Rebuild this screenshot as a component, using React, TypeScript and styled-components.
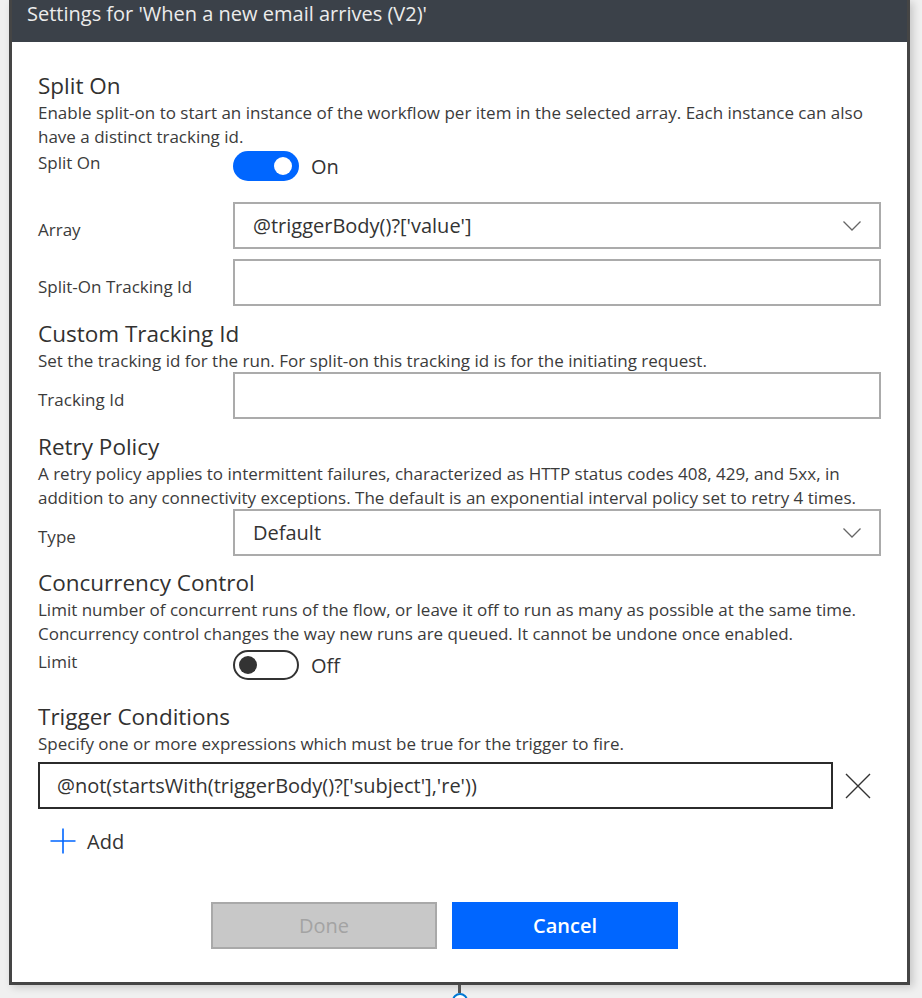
import React from "react";
import styled, { createGlobalStyle } from "styled-components";

const GlobalStyle = createGlobalStyle`
  html, body {
    margin: 0;
    padding: 0;
    background: #f0f0f0;
    overflow: hidden;
  }
  body {
    font-family: "Open Sans", "Noto Sans", sans-serif;
    color: #333333;
  }
`;

const Page = styled.div`
  width: 922px;
  height: 998px;
  box-sizing: border-box;
  padding-left: 9px;
  display: flex;
  flex-direction: column;
`;

const Dialog = styled.div`
  width: 901px;
  box-sizing: border-box;
  background: #ffffff;
  border: 3px solid #454545;
  border-top: 0;
  box-shadow: 3px 2px 8px rgba(0, 0, 0, 0.18);
`;

const Header = styled.div`
  height: 42px;
  background: #3b4149;
  padding: 0 15px;
  color: #ececec;
  font-size: 20px;
  line-height: 28px;
  white-space: nowrap;
  overflow: hidden;
`;

const Body = styled.div`
  padding: 29px 26px 33px 26px;
  display: flex;
  flex-direction: column;
`;

const Heading = styled.div<{ $mt?: number }>`
  font-size: 22.5px;
  line-height: 30px;
  color: #323130;
  margin-top: ${(p) => p.$mt ?? 0}px;
`;

const Description = styled.div`
  font-size: 17px;
  line-height: 24px;
  color: #3b3b3b;
  white-space: nowrap;
`;

const Row = styled.div<{ $mt?: number }>`
  display: grid;
  grid-template-columns: 195px 1fr;
  align-items: start;
  margin-top: ${(p) => p.$mt ?? 0}px;
`;

const Label = styled.div<{ $pt?: number }>`
  font-size: 17px;
  line-height: 24px;
  color: #3b3b3b;
  padding-top: ${(p) => p.$pt ?? 0}px;
`;

const ToggleWrap = styled.div`
  display: flex;
  align-items: center;
  gap: 12px;
  height: 30px;
`;

const Track = styled.div<{ $on: boolean }>`
  width: 66px;
  height: 30px;
  box-sizing: border-box;
  border-radius: 15px;
  display: flex;
  align-items: center;
  justify-content: ${(p) => (p.$on ? "flex-end" : "flex-start")};
  padding: 0 ${(p) => (p.$on ? 7 : 4)}px;
  background: ${(p) => (p.$on ? "#0066ff" : "#ffffff")};
  border: ${(p) => (p.$on ? "none" : "2px solid #333333")};
`;

const Knob = styled.div<{ $on: boolean }>`
  width: 18px;
  height: 18px;
  border-radius: 50%;
  background: ${(p) => (p.$on ? "#ffffff" : "#333333")};
`;

const ToggleText = styled.span`
  font-size: 20px;
  line-height: 24px;
  color: #333333;
  padding-top: 2px;
`;

const Field = styled.div<{ $dark?: boolean }>`
  height: 47px;
  box-sizing: border-box;
  border: 2px solid ${(p) => (p.$dark ? "#2b2b2b" : "#ababab")};
  display: flex;
  align-items: center;
  justify-content: space-between;
  padding: 0 17px 0 18px;
  font-size: 20px;
  color: #333333;
  white-space: nowrap;
  overflow: hidden;
`;

const ConditionRow = styled.div`
  display: flex;
  align-items: center;
  gap: 12px;
  margin-top: 6px;
`;

const ConditionField = styled(Field)`
  flex: 1;
  padding-left: 17px;
`;

const IconButton = styled.div`
  width: 26px;
  height: 30px;
  margin-right: 10px;
  display: flex;
  align-items: center;
  justify-content: center;
`;

const AddButton = styled.div`
  display: flex;
  align-items: center;
  gap: 11px;
  margin-top: 12px;
  padding-left: 12px;
  height: 40px;
  font-size: 20px;
  color: #333333;
`;

const ButtonRow = styled.div`
  display: flex;
  justify-content: center;
  gap: 15px;
  margin-top: 41px;
  padding-right: 30px;
`;

const Button = styled.div<{ $primary?: boolean }>`
  width: 226px;
  height: 47px;
  box-sizing: border-box;
  display: flex;
  align-items: center;
  justify-content: center;
  font-size: 20px;
  font-weight: ${(p) => (p.$primary ? 600 : 400)};
  background: ${(p) => (p.$primary ? "#0066ff" : "#c8c8c8")};
  color: ${(p) => (p.$primary ? "#ffffff" : "#a3a3a3")};
  border: ${(p) => (p.$primary ? "none" : "2px solid #a9a9a9")};
`;

const Connector = styled.div`
  width: 901px;
  display: flex;
  flex-direction: column;
  align-items: center;
`;

const ConnectorLine = styled.div`
  width: 3px;
  height: 8px;
  background: #555555;
`;

const ConnectorDot = styled.div`
  width: 16px;
  height: 16px;
  box-sizing: border-box;
  border-radius: 50%;
  border: 2px solid #0078d4;
  background: #ffffff;
`;

function Toggle({ on }: { on: boolean }) {
  return (
    <ToggleWrap>
      <Track $on={on}>
        <Knob $on={on} />
      </Track>
      <ToggleText>{on ? "On" : "Off"}</ToggleText>
    </ToggleWrap>
  );
}

function Chevron() {
  return (
    <svg width="20" height="12" viewBox="0 0 20 12">
      <path d="M1.5 1.5 L10 10 L18.5 1.5" fill="none" stroke="#666" strokeWidth="1.3" />
    </svg>
  );
}

export default function App() {
  return (
    <>
      <GlobalStyle />
      <Page>
        <Dialog>
          <Header>Settings for 'When a new email arrives (V2)'</Header>
          <Body>
            <Heading>Split On</Heading>
            <Description>
              Enable split-on to start an instance of the workflow per item in the selected array. Each instance can also
              <br />
              have a distinct tracking id.
            </Description>
            <Row $mt={2}>
              <Label>Split On</Label>
              <Toggle on />
            </Row>
            <Row $mt={21}>
              <Label $pt={16}>Array</Label>
              <Field>
                <span>@triggerBody()?['value']</span>
                <Chevron />
              </Field>
            </Row>
            <Row $mt={10}>
              <Label $pt={16}>Split-On Tracking Id</Label>
              <Field />
            </Row>

            <Heading $mt={13}>Custom Tracking Id</Heading>
            <Description>
              Set the tracking id for the run. For split-on this tracking id is for the initiating request.
            </Description>
            <Row $mt={-1}>
              <Label $pt={16}>Tracking Id</Label>
              <Field />
            </Row>

            <Heading $mt={13}>Retry Policy</Heading>
            <Description>
              A retry policy applies to intermittent failures, characterized as HTTP status codes 408, 429, and 5xx, in
              <br />
              addition to any connectivity exceptions. The default is an exponential interval policy set to retry 4 times.
            </Description>
            <Row $mt={-1}>
              <Label $pt={16}>Type</Label>
              <Field>
                <span>Default</span>
                <Chevron />
              </Field>
            </Row>

            <Heading $mt={12}>Concurrency Control</Heading>
            <Description>
              Limit number of concurrent runs of the flow, or leave it off to run as many as possible at the same time.
              <br />
              Concurrency control changes the way new runs are queued. It cannot be undone once enabled.
            </Description>
            <Row $mt={4}>
              <Label>Limit</Label>
              <Toggle on={false} />
            </Row>

            <Heading $mt={22}>Trigger Conditions</Heading>
            <Description>Specify one or more expressions which must be true for the trigger to fire.</Description>
            <ConditionRow>
              <ConditionField $dark>@not(startsWith(triggerBody()?['subject'],'re'))</ConditionField>
              <IconButton>
                <svg width="26" height="26" viewBox="0 0 26 26">
                  <path d="M1 1 L25 25 M25 1 L1 25" stroke="#333" strokeWidth="1.4" fill="none" />
                </svg>
              </IconButton>
            </ConditionRow>
            <AddButton>
              <svg width="26" height="26" viewBox="0 0 26 26">
                <path d="M13 0.5 V25.5 M0.5 13 H25.5" stroke="#0066ff" strokeWidth="1.6" fill="none" />
              </svg>
              <span>Add</span>
            </AddButton>

            <ButtonRow>
              <Button>Done</Button>
              <Button $primary>Cancel</Button>
            </ButtonRow>
          </Body>
        </Dialog>
        <Connector>
          <ConnectorLine />
          <ConnectorDot />
        </Connector>
      </Page>
    </>
  );
}
